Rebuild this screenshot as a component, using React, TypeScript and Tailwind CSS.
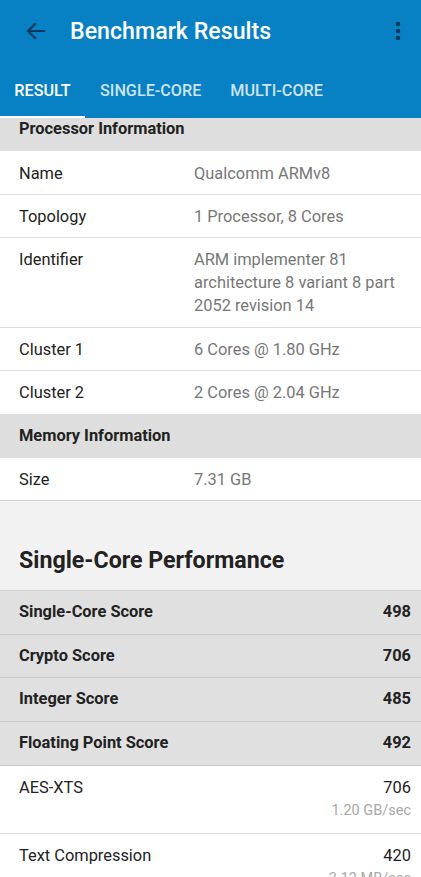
import React from "react";

const InfoRow = ({ label, value, extra = "" }: { label: string; value: React.ReactNode; extra?: string }) => (
  <div className={`flex border-b border-[#dcdcdc] bg-white pt-[10px] pb-[9px] text-[16.4px] leading-[23px] ${extra}`}>
    <div className="w-[194px] shrink-0 pl-[19px] text-[#222]">{label}</div>
    <div className="pr-[10px] text-[#777]">{value}</div>
  </div>
);

const SectionHeader = ({ title, className = "" }: { title: string; className?: string }) => (
  <div className={`flex items-center bg-[#dedede] pl-[19px] text-[16.4px] font-bold text-[#222] ${className}`}>{title}</div>
);

const ScoreRow = ({ label, value, h = "h-[44px]" }: { label: string; value: string; h?: string }) => (
  <div className={`flex ${h} items-center justify-between border-b border-[#cacaca] bg-[#e0e0e0] pl-[19px] pr-[10px] text-[16.4px] font-bold text-[#222]`}>
    <span>{label}</span>
    <span>{value}</span>
  </div>
);

const BenchRow = ({ label, value, sub }: { label: string; value: string; sub: string }) => (
  <div className="border-b border-[#dcdcdc] bg-white pl-[19px] pr-[10px] pt-[10px] pb-[10px]">
    <div className="flex justify-between text-[16.4px] leading-[23px] text-[#222]">
      <span>{label}</span>
      <span>{value}</span>
    </div>
    <div className="text-right text-[14.5px] leading-[24px] text-[#a8a8a8]">{sub}</div>
  </div>
);

export default function App() {
  return (
    <div className="h-[877px] w-[421px] overflow-hidden bg-[#f2f2f2]" style={{ fontFamily: "Roboto, 'Noto Sans', sans-serif" }}>
      <div className="bg-[#0780c4]">
        <div className="flex h-[62px] items-center">
          <div className="flex w-[70px] justify-center pl-[2px]">
            <svg width="24" height="24" viewBox="0 0 24 24" fill="none">
              <path d="M20 12H4.5M11 5l-7 7 7 7" stroke="#0d3a5c" strokeWidth="2.2" strokeLinecap="square" />
            </svg>
          </div>
          <div className="flex-1 text-[23.2px] font-medium text-white">Benchmark Results</div>
          <div className="flex w-[50px] justify-center pl-[4px]">
            <svg width="6" height="20" viewBox="0 0 6 20">
              <circle cx="3" cy="3" r="2.3" fill="#0d3a5c" />
              <circle cx="3" cy="10" r="2.3" fill="#0d3a5c" />
              <circle cx="3" cy="17" r="2.3" fill="#0d3a5c" />
            </svg>
          </div>
        </div>
        <div className="flex h-[56px] items-stretch text-[16.2px] font-medium">
          <div className="relative flex w-[85px] items-center justify-center pt-[3px] text-white">
            RESULT
            <div className="absolute bottom-0 left-0 h-[2px] w-full bg-white" />
          </div>
          <div className="flex items-center px-[15px] pt-[3px] text-[#cde4f3]">SINGLE-CORE</div>
          <div className="flex items-center px-[14px] pt-[3px] text-[#cde4f3]">MULTI-CORE</div>
        </div>
      </div>

      <SectionHeader title="Processor Information" className="h-[33px] items-start leading-[22px]" />
      <InfoRow label="Name" value="Qualcomm ARMv8" extra="pt-[11px]" />
      <InfoRow label="Topology" value="1 Processor, 8 Cores" />
      <InfoRow
        label="Identifier"
        extra="pb-[10px]"
        value={
          <>
            ARM implementer 81
            <br />
            architecture 8 variant 8 part
            <br />
            2052 revision 14
          </>
        }
      />
      <InfoRow label="Cluster 1" value="6 Cores @ 1.80 GHz" />
      <div className="flex bg-white pt-[10px] pb-[10px] text-[16.4px] leading-[23px]">
        <div className="w-[194px] shrink-0 pl-[19px] text-[#222]">Cluster 2</div>
        <div className="text-[#777]">2 Cores @ 2.04 GHz</div>
      </div>
      <SectionHeader title="Memory Information" className="h-[44px]" />
      <div className="flex border-b border-[#cfcfcf] bg-white pt-[10px] pb-[9px] text-[16.4px] leading-[23px]">
        <div className="w-[194px] shrink-0 pl-[19px] text-[#222]">Size</div>
        <div className="text-[#777]">7.31 GB</div>
      </div>

      <div className="flex h-[90px] items-end border-b border-[#cfcfcf] bg-[#f2f2f2] pb-[12px] pl-[19px] text-[23.2px] font-bold text-[#222]">
        Single-Core Performance
      </div>
      <ScoreRow label="Single-Core Score" value="498" />
      <ScoreRow label="Crypto Score" value="706" h="h-[43px]" />
      <ScoreRow label="Integer Score" value="485" />
      <ScoreRow label="Floating Point Score" value="492" />
      <BenchRow label="AES-XTS" value="706" sub="1.20 GB/sec" />
      <BenchRow label="Text Compression" value="420" sub="3.12 MB/sec" />
    </div>
  );
}
